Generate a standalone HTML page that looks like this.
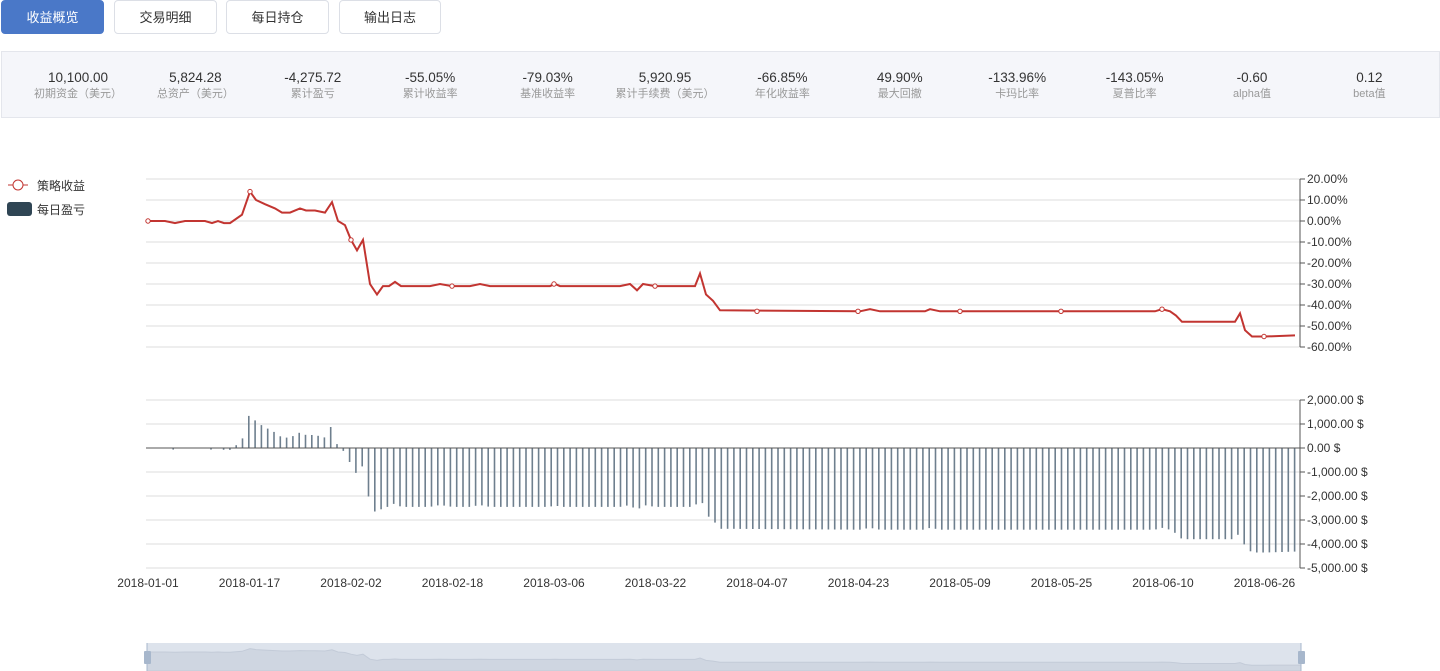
<!DOCTYPE html>
<html><head><meta charset="utf-8"><style>
body{margin:0;width:1440px;height:671px;overflow:hidden;background:#fff;font-family:"Liberation Sans","Noto Sans CJK SC",sans-serif;position:relative}
.tab{position:absolute;top:0;height:34px;line-height:34px;text-align:center;font-size:13px;color:#333;border:1px solid #dcdfe6;border-radius:4px;box-sizing:border-box;background:#fff}
.tab.on{background:#4a78c8;color:#fff;border-color:#4a78c8}
.stats{position:absolute;left:1px;top:51px;width:1439px;height:67px;background:#f5f6fa;border:1px solid #e4e6ec;box-sizing:border-box}
.c{position:absolute;top:17px;width:118px;text-align:center}
.v{font-size:13.5px;color:#333;line-height:17px}
.l{font-size:11px;color:#999;line-height:16px}
svg text{font-family:"Liberation Sans","Noto Sans CJK SC",sans-serif}
</style></head><body>
<div class="tab on" style="left:1px;width:103px">收益概览</div>
<div class="tab" style="left:114px;width:103px">交易明细</div>
<div class="tab" style="left:226px;width:103px">每日持仓</div>
<div class="tab" style="left:339px;width:102px">输出日志</div>
<div class="stats" id="st"></div>
<svg id="ch" width="1440" height="671" style="position:absolute;left:0;top:0" xmlns="http://www.w3.org/2000/svg"></svg>
<script>
var vals=[["10,100.00","初期资金（美元）"],["5,824.28","总资产（美元）"],["-4,275.72","累计盈亏"],["-55.05%","累计收益率"],["-79.03%","基准收益率"],["5,920.95","累计手续费（美元）"],["-66.85%","年化收益率"],["49.90%","最大回撤"],["-133.96%","卡玛比率"],["-143.05%","夏普比率"],["-0.60","alpha值"],["0.12","beta值"]];
var h="";vals.forEach(function(a,i){h+='<div class="c" style="left:'+(17+i*117.4)+'px"><div class="v">'+a[0]+'</div><div class="l">'+a[1]+'</div></div>'});
document.getElementById("st").innerHTML=h;
var P=[[148,0],[165,0],[175,-1],[185,0],[205,0],[212,-1],[218,0],[224,-1],[230,-1],[242,3],[250,14],[256,10],[265,8],[275,6],[282,4],[290,4],[300,6],[306,5],[315,5],[325,4],[332,9],[338,0],[345,-2],[351,-9],[357,-14],[363,-9],[370,-30],[377,-35],[383,-31],[389,-31],[395,-29],[401,-31],[430,-31],[440,-30],[452,-31],[470,-31],[480,-30],[490,-31],[550,-31],[555,-30],[560,-31],[620,-31],[630,-30],[637,-33],[643,-30],[655,-31],[695,-31],[700,-25],[706,-35],[713,-38],[720,-42.5],[860,-43],[870,-42],[880,-43],[925,-43],[930,-42],[940,-43],[1155,-43],[1162,-42],[1170,-43],[1176,-45],[1182,-48],[1235,-48],[1240,-44],[1245,-52],[1252,-55],[1265,-55],[1295,-54.5]];
function Y(p){return 221-p*2.1}
function at(x){for(var i=1;i<P.length;i++){if(x<=P[i][0]){var a=P[i-1],b=P[i];return a[1]+(b[1]-a[1])*(x-a[0])/(b[0]-a[0])}}return P[P.length-1][1]}
var s="";
for(var i=0;i<9;i++){var y=179+i*21;s+='<line x1="146" x2="1300" y1="'+y+'" y2="'+y+'" stroke="#ddd"/>';s+='<line x1="1300" x2="1305" y1="'+y+'" y2="'+y+'" stroke="#555"/><text x="1307" y="'+(y+4)+'" font-size="12" fill="#333">'+((20-i*10).toFixed(2))+'%</text>'}
s+='<line x1="1300" x2="1300" y1="179" y2="347" stroke="#555"/>';
for(var i=0;i<8;i++){var y=400+i*24;s+='<line x1="146" x2="1300" y1="'+y+'" y2="'+y+'" stroke="#ddd"/>';var v=2000-i*1000;var t=(v<0?"-":"")+Math.abs(v).toLocaleString("en-US",{minimumFractionDigits:2})+" $";s+='<line x1="1300" x2="1305" y1="'+y+'" y2="'+y+'" stroke="#555"/><text x="1307" y="'+(y+4)+'" font-size="12" fill="#333">'+t+'</text>'}
s+='<line x1="1300" x2="1300" y1="400" y2="568" stroke="#555"/>';
for(var x=148;x<1298;x+=6.3){var p=at(x);var d=p>0?p*2.6:p*1.9;if(Math.abs(d)<1.5)continue;s+='<line x1="'+x.toFixed(1)+'" x2="'+x.toFixed(1)+'" y1="448" y2="'+(448-d).toFixed(1)+'" stroke="#6e7f8e" stroke-width="1.6"/>'}
s+='<line x1="146" x2="1300" y1="448" y2="448" stroke="#555"/>';
var d="M"+P.map(function(p){return p[0]+","+Y(p[1]).toFixed(1)}).join(" L");
s+='<path d="'+d+'" fill="none" stroke="#c23531" stroke-width="2"/>';
[[148,0],[250,14],[351,-9],[452,-31],[554,-30],[655,-31],[757,-43],[858,-43],[960,-43],[1061,-43],[1162,-42],[1264,-55]].forEach(function(p){s+='<circle cx="'+p[0]+'" cy="'+Y(p[1])+'" r="2.2" fill="#fff" stroke="#c23531" stroke-width="1"/>'});
var dates=["2018-01-01","2018-01-17","2018-02-02","2018-02-18","2018-03-06","2018-03-22","2018-04-07","2018-04-23","2018-05-09","2018-05-25","2018-06-10","2018-06-26"];
dates.forEach(function(t,i){s+='<text x="'+(148+i*101.5)+'" y="587" font-size="12" fill="#333" text-anchor="middle">'+t+'</text>'});
s+='<line x1="8" x2="28" y1="185" y2="185" stroke="#c23531"/><circle cx="18" cy="185" r="5" fill="#fff" stroke="#c23531"/><text x="37" y="190" font-size="12" fill="#333">策略收益</text>';
s+='<rect x="7" y="202" width="25" height="14" rx="3" fill="#2f4554"/><text x="37" y="214" font-size="12" fill="#333">每日盈亏</text>';
s+='<rect x="147" y="643" width="1154" height="28" fill="#dde3ec"/>';
var m="M147,671 L147,652";P.forEach(function(p){m+=" L"+p[0]+","+(652+(-p[1])*0.24).toFixed(1)});m+=" L1301,665 L1301,671Z";
s+='<path d="'+m+'" fill="#cfd6e1" stroke="#c3cbd8"/>';
s+='<line x1="147" x2="147" y1="643" y2="671" stroke="#a7b7cc"/><line x1="1301" x2="1301" y1="643" y2="671" stroke="#a7b7cc"/>';
s+='<rect x="144" y="651" width="7" height="13" rx="1" fill="#a7b7cc"/><rect x="1298" y="651" width="7" height="13" rx="1" fill="#a7b7cc"/>';
document.getElementById("ch").innerHTML=s;
</script>
</body></html>
